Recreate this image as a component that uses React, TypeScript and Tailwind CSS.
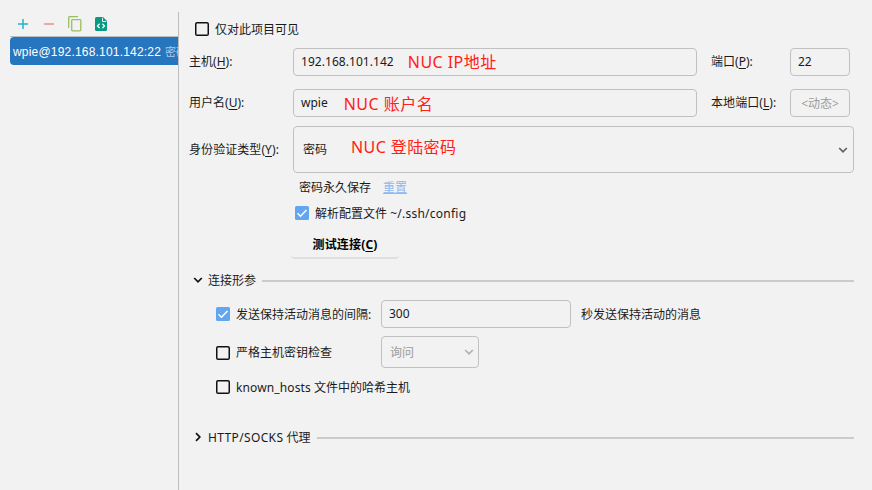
import type { ReactNode } from "react";

const uiFont = "font-['Noto_Sans','Noto_Sans_CJK_SC',sans-serif]";

function Mnemonic({ text, letter, end = ":" }: { text: string; letter: string; end?: string }) {
  return (
    <>
      {text}(<span className="underline underline-offset-2">{letter}</span>){end}
    </>
  );
}

function Check({ checked = false }: { checked?: boolean }) {
  return (
    <svg className="size-[14px] shrink-0" viewBox="0 0 14 14" fill="none">
      {checked ? (
        <>
          <rect width="14" height="14" rx="1.5" fill="#62a6f2" />
          <path d="M2.5 7.2l3 3 6-6.3" stroke="#fff" strokeWidth="1.5" />
        </>
      ) : (
        <rect x="0.75" y="0.75" width="12.5" height="12.5" rx="1.3" stroke="#111" strokeWidth="1.5" />
      )}
    </svg>
  );
}

function Chevron({ className }: { className: string }) {
  return (
    <svg className={className} viewBox="0 0 10 10" fill="none" stroke="currentColor" strokeWidth="1.7">
      <path d="M1.2 3l3.8 3.8L8.8 3" />
    </svg>
  );
}

function Field({ className, children }: { className: string; children: ReactNode }) {
  return (
    <div className={`flex shrink-0 items-center rounded-[4px] border border-[#c1c1c1] ${className}`}>
      {children}
    </div>
  );
}

function Note({ className, children }: { className: string; children: ReactNode }) {
  return <span className={`text-[16px] leading-5 text-[#ff2015] ${className}`}>{children}</span>;
}

function Sidebar() {
  return (
    <aside className="flex w-[178px] shrink-0 flex-col overflow-hidden pt-[12px] pl-[10px]">
      <div className="flex h-[25px] shrink-0 items-center border-b border-[#bdbdbd] pl-[8px]">
        <svg className="h-[10px] w-[10px] shrink-0" viewBox="0 0 10 10" stroke="#24b3c8" strokeWidth="1.5">
          <path d="M0 5h10M5 0v10" />
        </svg>
        <svg className="ml-[16px] h-[10px] w-[10px] shrink-0" viewBox="0 0 10 10" stroke="#ef8d8d" strokeWidth="1.5">
          <path d="M0 5h10" />
        </svg>
        <svg className="ml-[14px] h-[16px] w-[14px] shrink-0" viewBox="0 0 14 16" fill="none" stroke="#9abf61" strokeWidth="1.3">
          <path d="M.7 12V1.5q0-.8.8-.8H10" />
          <rect x="3.7" y="3.7" width="9.1" height="11.1" rx=".8" />
        </svg>
        <svg className="ml-[13px] h-[14px] w-[12px] shrink-0" viewBox="0 0 12 14" fill="none">
          <path d="M1.5 0H8l4 4v8.5q0 1.5-1.5 1.5h-9Q0 14 0 12.500v-11Q0 0 1.500 0z" fill="#079b84" />
          <path d="M7.500 .8v3.700h3.700" stroke="#f2f2f2" />
          <path d="M4.600 6.700L2.500 8.900l2.100 2.200M7.400 6.700l2.100 2.200-2.100 2.200" stroke="#fff" strokeWidth="1.300" />
        </svg>
      </div>
      <div className="flex h-[28px] shrink-0 items-center overflow-hidden rounded-l-[4px] bg-[#2675bf] pt-[2px] pl-[3px] whitespace-nowrap">
        <span className="font-['Liberation_Sans',sans-serif] text-[12px] tracking-[0.19px] text-white">
          wpie@192.168.101.142:22
        </span>
        <span className="ml-[4px] text-[11px] text-[#a9cbea]">密码</span>
      </div>
    </aside>
  );
}

export default function App() {
  return (
    <div className={`flex h-[490px] w-[872px] overflow-hidden bg-[#f2f2f2] text-[12px] leading-[18px] whitespace-nowrap text-[#1a1a1a] ${uiFont}`}>
      <Sidebar />
      <main className="mt-[12px] flex flex-1 flex-col border-l border-[#bdbdbd] pt-[8px] pr-[18px] pl-[10px]">
        <div className="flex h-[18px] items-center gap-[6px] pl-[6px]">
          <Check />
          <span className="pt-px">仅对此项目可见</span>
        </div>

        <div className="mt-[10px] flex h-[28px] items-center">
          <span className="w-[104px]"><Mnemonic text="主机" letter="H" /></span>
          <Field className="h-[28px] w-[404px] pl-[7px]">
            <span className="tracking-[0.05px]">192.168.101.142</span>
            <Note className="ml-[14px] tracking-[0.45px]">NUC IP地址</Note>
          </Field>
          <span className="ml-[14px] w-[79px]"><Mnemonic text="端口" letter="P" /></span>
          <Field className="h-[28px] w-[60px] pl-[7px]">22</Field>
        </div>

        <div className="mt-[13px] flex h-[28px] items-center">
          <span className="w-[104px]"><Mnemonic text="用户名" letter="U" /></span>
          <Field className="h-[28px] w-[404px] pl-[7px]">
            <span>wpie</span>
            <Note className="mt-[2px] ml-[16px] tracking-[0.5px]">NUC 账户名</Note>
          </Field>
          <span className="ml-[14px] w-[79px] tracking-[0.07px]"><Mnemonic text="本地端口" letter="L" /></span>
          <Field className="h-[28px] w-[60px] justify-center pt-[2px] text-[#9c9c9c]">&lt;动态&gt;</Field>
        </div>

        <div className="mt-[9px] flex h-[47px] items-center">
          <span className="w-[104px] pt-px tracking-[0.07px]"><Mnemonic text="身份验证类型" letter="Y" /></span>
          <Field className="h-[47px] w-[561px] pr-[5px] pl-[9px]">
            <span className="pt-px">密码</span>
            <Note className="mb-[5px] ml-[24px] tracking-[0.4px]">NUC 登陆密码</Note>
            <Chevron className="ml-auto size-[10px] text-[#606060]" />
          </Field>
        </div>

        <div className="mt-[6px] flex h-[18px] items-center gap-[12px] pl-[110px]">
          <span>密码永久保存</span>
          <span className="text-[#8db9ee] underline underline-offset-1">重置</span>
        </div>

        <div className="mt-[7px] flex h-[18px] items-center gap-[6px] pl-[106px]">
          <Check checked />
          <span className="pt-px">解析配置文件 <span className="tracking-[0.25px]">~/.ssh/config</span></span>
        </div>

        <div className="mt-[11px] ml-[102px] flex h-[26px] w-[108px] items-center justify-center rounded-[4px] border-b-2 border-[#dfdfdf] font-bold tracking-[0.15px] text-black">
          <Mnemonic text="测试连接" letter="C" end="" />
        </div>

        <div className="mt-[12px] flex h-[18px] items-center pl-[4px]">
          <Chevron className="size-[10px] text-[#111]" />
          <span className="ml-[5px] pt-px">连接形参</span>
          <div className="mt-px ml-[6px] h-[2px] flex-1 bg-[#cbcbcb]" />
        </div>

        <div className="mt-[11px] flex h-[28px] items-center pl-[27px]">
          <Check checked />
          <span className="ml-[6px] w-[145px] pt-px">发送保持活动消息的间隔:</span>
          <Field className="h-[28px] w-[190px] pl-[7px]">300</Field>
          <span className="ml-[10px] pt-px">秒发送保持活动的消息</span>
        </div>

        <div className="mt-[8px] flex h-[32px] items-center pl-[27px]">
          <div className="pt-[2px]"><Check /></div>
          <span className="ml-[6px] w-[145px] pt-[2px]">严格主机密钥检查</span>
          <Field className="h-[32px] w-[98px] justify-between pr-[4px] pl-[8px] text-[#9c9c9c]">
            <span className="pt-[2px]">询问</span>
            <Chevron className="size-[10px] text-[#b0b0b0]" />
          </Field>
        </div>

        <div className="mt-[10px] flex h-[18px] items-center gap-[6px] pl-[27px]">
          <Check />
          <span className="pt-px"><span className="tracking-[0.12px]">known_hosts</span> 文件中的哈希主机</span>
        </div>

        <div className="mt-[32px] flex h-[18px] items-center pl-[4px]">
          <Chevron className="size-[10px] -rotate-90 text-[#111]" />
          <span className="ml-[5px] pt-px"><span className="tracking-[0.36px]">HTTP/SOCKS</span> 代理</span>
          <div className="mt-[2px] ml-[6px] h-[2px] flex-1 bg-[#cbcbcb]" />
        </div>
      </main>
    </div>
  );
}
